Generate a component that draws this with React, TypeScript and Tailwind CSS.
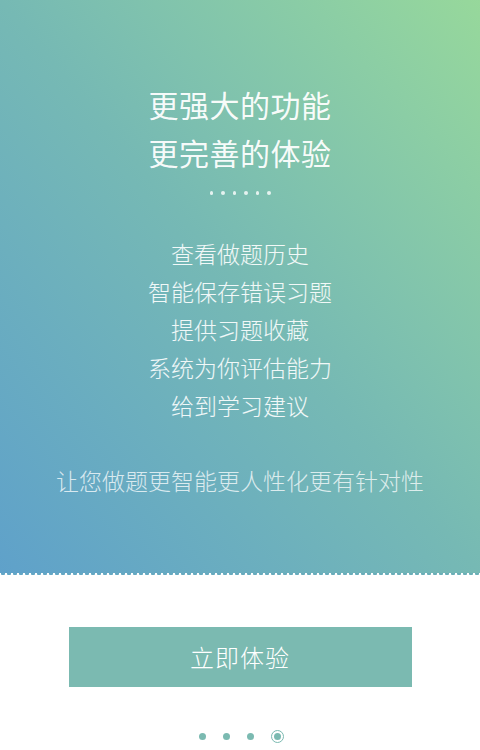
import { Fragment } from 'react';

const features = ['查看做题历史', '智能保存错误习题', '提供习题收藏', '系统为你评估能力', '给到学习建议'];

export default function App() {
  return (
    <div
      className="w-[480px] h-[750px] flex flex-col bg-white overflow-hidden"
      style={{ fontFamily: '"Noto Sans CJK SC", "Noto Sans", sans-serif' }}
    >
      {/* Hero */}
      <div className="h-[573px] bg-gradient-to-tr from-[#5fa1ca] via-[#76b9b4] to-[#97d89b] flex flex-col items-center pt-[80px] text-white">
        <div className="text-[30px] leading-[48px] font-normal text-center tracking-[0.5px] text-white/95">
          <p>更强大的功能</p>
          <p>更完善的体验</p>
        </div>

        <div className="flex gap-[8px] mt-[15px]">
          {[0, 1, 2, 3, 4, 5].map((i) => (
            <span key={i} className="w-[3.5px] h-[3.5px] rounded-full bg-white/80" />
          ))}
        </div>

        <div className="mt-[39px] text-[23px] leading-[38px] font-light text-center text-white/90">
          {features.map((f) => (
            <p key={f}>{f}</p>
          ))}
        </div>

        <p className="mt-[37px] text-[23px] leading-[38px] font-light text-white/75">
          让您做题更智能更人性化更有针对性
        </p>
      </div>

      {/* scalloped edge */}
      <div className="h-[3px] bg-gradient-to-r from-[#63a6c6] to-[#6bafb6] [mask-image:radial-gradient(circle_at_3px_0,black_2px,transparent_2.5px)] [mask-size:6px_3px] [mask-repeat:repeat-x]" />

      <div className="flex justify-center mt-[51px]">
        <button className="w-[343px] h-[60px] bg-[#7bbab1] text-white text-[24px] font-light tracking-[1px]">
          立即体验
        </button>
      </div>

      <div className="flex items-center justify-center gap-[17px] mt-[43px] pl-[2px]">
        {[0, 1, 2].map((i) => (
          <Fragment key={i}>
            <span className="w-[7px] h-[7px] rounded-full bg-[#7bbab1]" />
          </Fragment>
        ))}
        <span className="w-[13px] h-[13px] rounded-full border border-[#7bbab1] flex items-center justify-center">
          <span className="w-[7px] h-[7px] rounded-full bg-[#7bbab1]" />
        </span>
      </div>
    </div>
  );
}
